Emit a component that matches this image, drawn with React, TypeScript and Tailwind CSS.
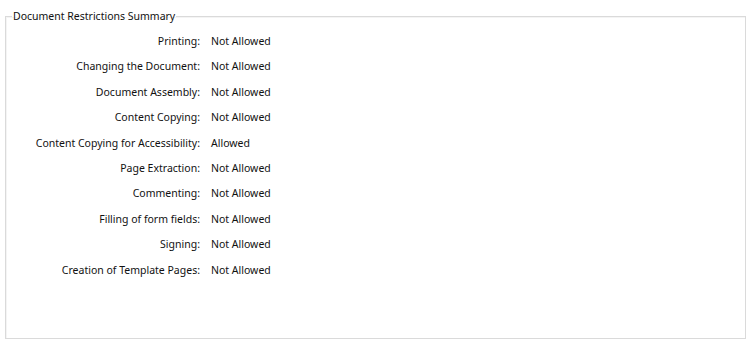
import React from 'react'

const RESTRICTIONS = [
  { label: 'Printing', value: 'Not Allowed' },
  { label: 'Changing the Document', value: 'Not Allowed' },
  { label: 'Document Assembly', value: 'Not Allowed' },
  { label: 'Content Copying', value: 'Not Allowed' },
  { label: 'Content Copying for Accessibility', value: 'Allowed' },
  { label: 'Page Extraction', value: 'Not Allowed' },
  { label: 'Commenting', value: 'Not Allowed' },
  { label: 'Filling of form fields', value: 'Not Allowed' },
  { label: 'Signing', value: 'Not Allowed' },
  { label: 'Creation of Template Pages', value: 'Not Allowed' },
]

export default function App() {
  return (
    <div
      className="w-[750px] h-[345px] bg-white text-[10.5px] text-[#111] pt-[8px] pl-[5px]"
      style={{ fontFamily: '"Noto Sans", "Open Sans", sans-serif' }}
    >
      {/* Group box */}
      <fieldset className="w-[741px] h-[331px] border border-[#dadada] shadow-[inset_1px_1px_0_#f4f4f4]">
        <legend className="ml-[6px] px-px leading-[16px]">Document Restrictions Summary</legend>

        <div className="grid grid-cols-[194px_auto] gap-x-[11px] pt-[5px] justify-start">
          {RESTRICTIONS.map((r) => (
            <React.Fragment key={r.label}>
              <div className="text-right leading-[25.4px]">{r.label}:</div>
              <div className="leading-[25.4px]">{r.value}</div>
            </React.Fragment>
          ))}
        </div>
      </fieldset>
    </div>
  )
}
